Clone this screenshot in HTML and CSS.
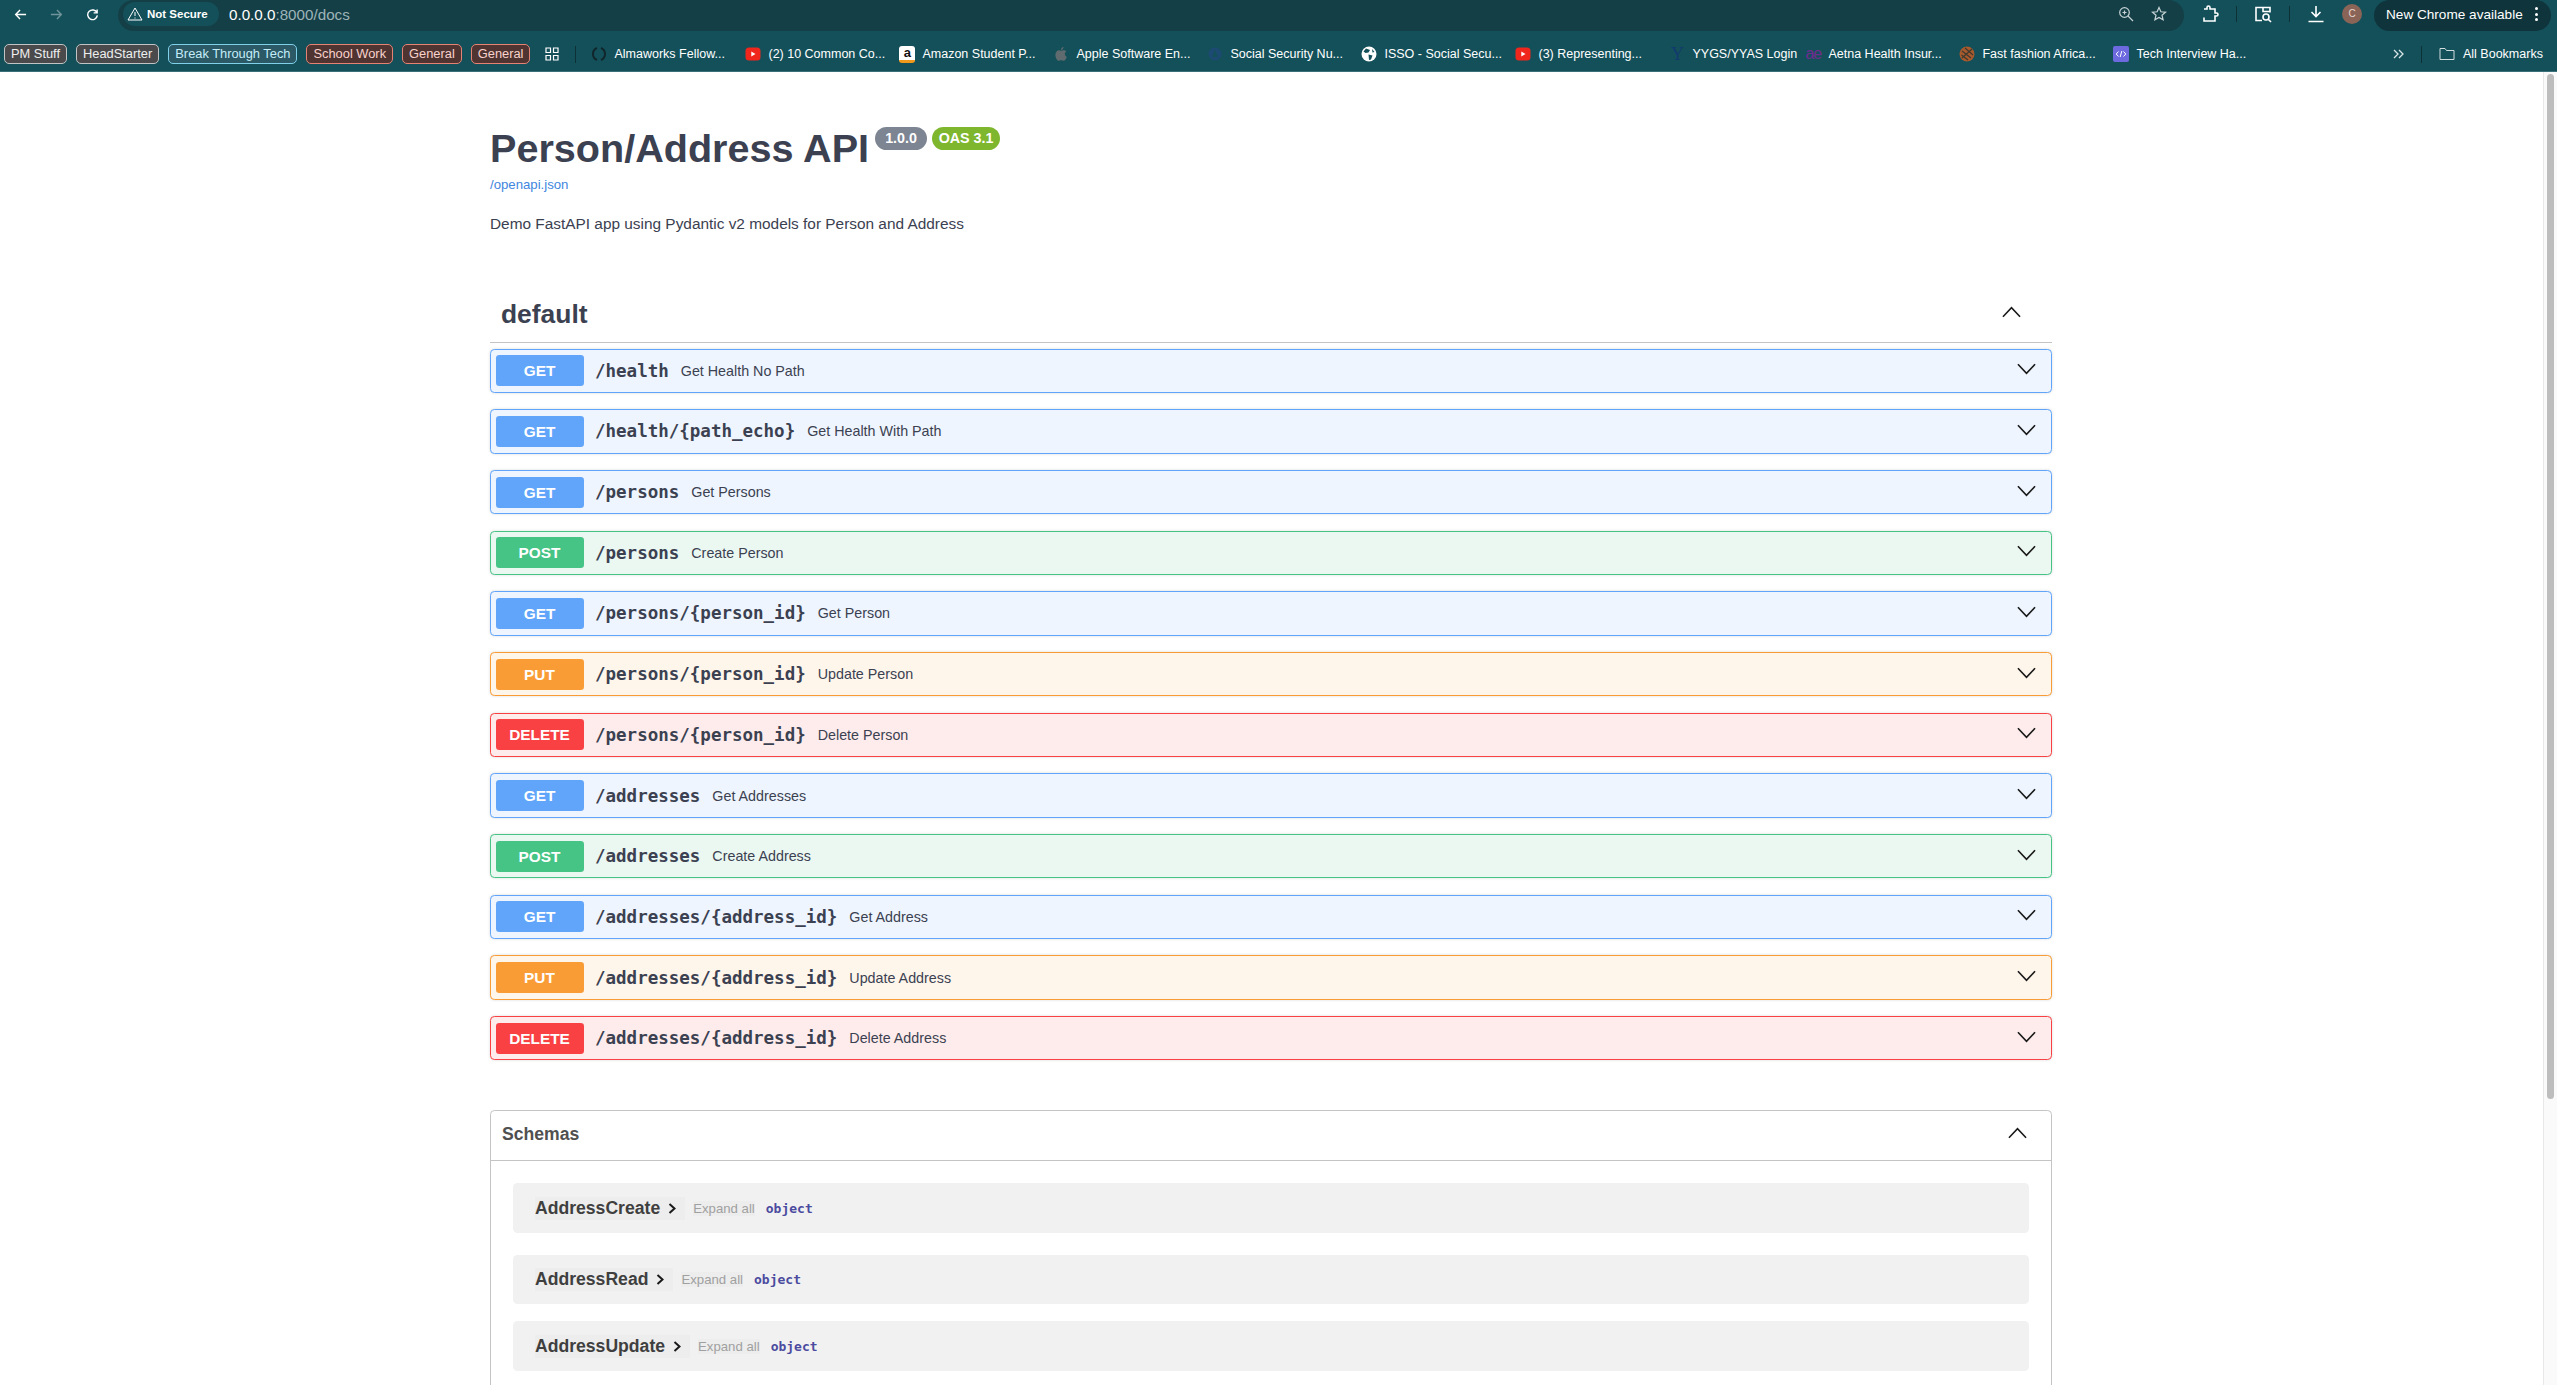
FILE: index.html
```html
<!DOCTYPE html>
<html lang="en">
<head>
    <meta charset="UTF-8">
    <title>Person/Address API - Swagger UI</title>
    <link rel="stylesheet" href="styles.css">
</head>
<body>
    <div class="window">
        <div class="toolbar">
            <div class="nav">
                <svg class="nav-icon" viewBox="0 0 14 14"><path d="M13 7H2M6.500 2.200 1.800 7l4.700 4.800" /></svg>
                <svg class="nav-icon dim" viewBox="0 0 14 14"><path d="M1 7h11M7.500 2.200 12.200 7l-4.700 4.800" /></svg>
                <svg class="nav-icon" viewBox="0 0 14 14"><path d="M11.800 5.200A5.200 5.200 0 1 0 12.200 8M12 1.500v3.800H8.200" /></svg>
            </div>
            <div class="omnibox">
                <div class="security">
                    <svg class="warn" viewBox="0 0 16 14"><path d="M8 1 15 13H1ZM8 5v4M8 10.500v1" /></svg>
                    <span>Not Secure</span>
                </div>
                <div class="url"><span class="host">0.0.0.0</span>:8000/docs</div>
                <svg class="omni-icon zoom-icon" viewBox="0 0 16 16"><circle cx="6.500" cy="6.500" r="4.800" /><path d="M10 10l5 5M4.500 6.500h4M6.500 4.500v4" /></svg>
                <svg class="omni-icon" viewBox="0 0 16 16"><path d="M8 1.500l1.900 4.300 4.600.4-3.500 3 1.100 4.600L8 11.400l-4.100 2.400L5 9.200l-3.500-3 4.600-.4Z" /></svg>
            </div>
            <div class="actions">
                <svg class="action-icon" viewBox="0 0 18 18"><path d="M3 4h3V2.500a1.500 1.500 0 0 1 3 0V4h5v4h1.500a1.500 1.500 0 0 1 0 3H14v5H3v-3.500" /></svg>
                <span class="sep"></span>
                <svg class="action-icon" viewBox="0 0 18 18"><path d="M8 15.500H2v-13h14v5M2 2.500h14v4H9v-4" /><circle cx="12" cy="12" r="3" /><path d="M14.200 14.200 17 17" /></svg>
                <span class="sep"></span>
                <svg class="action-icon" viewBox="0 0 18 18"><path d="M9 1v10M4.500 7 9 11.500 13.500 7M1.500 16.500h15" /></svg>
                <span class="avatar">C</span>
                <div class="update-pill">New Chrome available<span class="dots"><i></i><i></i><i></i></span></div>
            </div>
        </div>

        <div class="bookmarks">
            <div class="groups">
                <span class="group gray">PM Stuff</span>
                <span class="group gray">HeadStarter</span>
                <span class="group blue">Break Through Tech</span>
                <span class="group red">School Work</span>
                <span class="group red">General</span>
                <span class="group red">General</span>
            </div>
            <svg class="apps" viewBox="0 0 14 14"><path d="M1 1h4.500v4.500H1ZM8.500 1H13v4.500H8.500ZM1 8.500h4.500V13H1ZM8.500 8.500H13V13H8.500Z" /></svg>
            <span class="bar-sep"></span>
            <div class="bookmark">
                <svg class="favicon" viewBox="0 0 16 16"><path class="alma" d="M6 2a6.500 6.500 0 0 0 0 12M10 2a6.500 6.500 0 0 1 0 12" /></svg>
                <span>Almaworks Fellow...</span>
            </div>
            <div class="bookmark">
                <svg class="favicon" viewBox="0 0 16 16"><rect x="0.500" y="1.500" width="15" height="13" rx="3.500" fill="#f0261c" /><path d="M6.300 5.500 10.500 8l-4.200 2.500Z" fill="#fff" /></svg>
                <span>(2) 10 Common Co...</span>
            </div>
            <div class="bookmark">
                <span class="amazon">a</span>
                <span>Amazon Student P...</span>
            </div>
            <div class="bookmark">
                <svg class="favicon" viewBox="0 0 16 16"><path d="M10.500 1c.1 1.500-1 3-2.500 3 0-1.500 1-2.800 2.500-3ZM8 4.800c.8 0 1.500-.6 2.700-.6 1 0 2 .5 2.600 1.400-2.200 1.300-1.800 4.400.5 5.300-.6 1.500-1.800 3.900-3.200 3.900-.9 0-1.300-.6-2.500-.6s-1.700.6-2.500.6C4 14.800 2.400 11.400 2.400 9c0-2.900 1.900-4.700 3.600-4.700 1 0 1.500.5 2 .5Z" fill="#5f6b6e" /></svg>
                <span>Apple Software En...</span>
            </div>
            <div class="bookmark">
                <svg class="favicon" viewBox="0 0 16 16"><circle cx="8" cy="8" r="6.500" fill="#1c4a72" /><path d="M8 3.500 11 11H5Z" fill="#14505a" /></svg>
                <span>Social Security Nu...</span>
            </div>
            <div class="bookmark">
                <svg class="favicon" viewBox="0 0 16 16"><circle cx="8" cy="8" r="7.500" fill="#fff" /><path d="M5 2.500 9 4 7.500 6.500 4.500 7 2.500 5.500ZM7.500 8.500l4 1-1.500 4L8 14ZM11 3l2.500 3-2 .5Z" fill="#14505a" /></svg>
                <span>ISSO - Social Secu...</span>
            </div>
            <div class="bookmark">
                <svg class="favicon" viewBox="0 0 16 16"><rect x="0.500" y="1.500" width="15" height="13" rx="3.500" fill="#f0261c" /><path d="M6.300 5.500 10.500 8l-4.200 2.500Z" fill="#fff" /></svg>
                <span>(3) Representing...</span>
            </div>
            <div class="bookmark short">
                <span class="yale">Y</span>
                <span>YYGS/YYAS Login</span>
            </div>
            <div class="bookmark">
                <span class="aetna">ae</span>
                <span>Aetna Health Insur...</span>
            </div>
            <div class="bookmark">
                <svg class="favicon" viewBox="0 0 16 16"><circle cx="8" cy="8" r="7.500" fill="#a85a2c" /><path d="M3 5l9 7M2.500 9 9 14M6 2l8 7M3 12 13 3" stroke="#3d3a30" stroke-width="1.200" /></svg>
                <span>Fast fashion Africa...</span>
            </div>
            <div class="bookmark">
                <svg class="favicon" viewBox="0 0 16 16"><rect x="0" y="0" width="16" height="16" rx="2" fill="#6d6ae0" /><path d="M5.500 5.500 3.200 8l2.300 2.500M10.500 5.500 12.800 8l-2.300 2.500M8.800 5l-1.600 6" stroke="#fff" fill="none" /></svg>
                <span>Tech Interview Ha...</span>
            </div>
            <svg class="more" viewBox="0 0 11 10"><path d="M1 1l4 4-4 4M6 1l4 4-4 4" /></svg>
            <span class="bar-sep end"></span>
            <div class="all-bookmarks">
                <svg class="folder" viewBox="0 0 16 14"><path d="M1 12.500V1.500h5l1.500 2H15v9Z" /></svg>
                <span>All Bookmarks</span>
            </div>
        </div>

        <div class="viewport">
            <div class="page">
                <div class="info">
                    <div class="title-row">
                        <h1>Person/Address API</h1>
                        <span class="version">1.0.0</span>
                        <span class="oas">OAS 3.1</span>
                    </div>
                    <a class="spec-link" href="#">/openapi.json</a>
                    <p class="description">Demo FastAPI app using Pydantic v2 models for Person and Address</p>
                </div>

                <div class="tag-header">
                    <h2>default</h2>
                    <svg class="arrow" viewBox="0 0 20 12"><path d="M1 11 10 1.500 19 11" /></svg>
                </div>

                <div class="opblock get">
                    <span class="method">GET</span><span class="path">/health</span><span class="summary">Get Health No Path</span>
                    <svg class="arrow" viewBox="0 0 20 12"><path d="M1 1 10 10.500 19 1" /></svg>
                </div>
                <div class="opblock get">
                    <span class="method">GET</span><span class="path">/health/{path_echo}</span><span class="summary">Get Health With Path</span>
                    <svg class="arrow" viewBox="0 0 20 12"><path d="M1 1 10 10.500 19 1" /></svg>
                </div>
                <div class="opblock get">
                    <span class="method">GET</span><span class="path">/persons</span><span class="summary">Get Persons</span>
                    <svg class="arrow" viewBox="0 0 20 12"><path d="M1 1 10 10.500 19 1" /></svg>
                </div>
                <div class="opblock post">
                    <span class="method">POST</span><span class="path">/persons</span><span class="summary">Create Person</span>
                    <svg class="arrow" viewBox="0 0 20 12"><path d="M1 1 10 10.500 19 1" /></svg>
                </div>
                <div class="opblock get">
                    <span class="method">GET</span><span class="path">/persons/{person_id}</span><span class="summary">Get Person</span>
                    <svg class="arrow" viewBox="0 0 20 12"><path d="M1 1 10 10.500 19 1" /></svg>
                </div>
                <div class="opblock put">
                    <span class="method">PUT</span><span class="path">/persons/{person_id}</span><span class="summary">Update Person</span>
                    <svg class="arrow" viewBox="0 0 20 12"><path d="M1 1 10 10.500 19 1" /></svg>
                </div>
                <div class="opblock delete">
                    <span class="method">DELETE</span><span class="path">/persons/{person_id}</span><span class="summary">Delete Person</span>
                    <svg class="arrow" viewBox="0 0 20 12"><path d="M1 1 10 10.500 19 1" /></svg>
                </div>
                <div class="opblock get">
                    <span class="method">GET</span><span class="path">/addresses</span><span class="summary">Get Addresses</span>
                    <svg class="arrow" viewBox="0 0 20 12"><path d="M1 1 10 10.500 19 1" /></svg>
                </div>
                <div class="opblock post">
                    <span class="method">POST</span><span class="path">/addresses</span><span class="summary">Create Address</span>
                    <svg class="arrow" viewBox="0 0 20 12"><path d="M1 1 10 10.500 19 1" /></svg>
                </div>
                <div class="opblock get">
                    <span class="method">GET</span><span class="path">/addresses/{address_id}</span><span class="summary">Get Address</span>
                    <svg class="arrow" viewBox="0 0 20 12"><path d="M1 1 10 10.500 19 1" /></svg>
                </div>
                <div class="opblock put">
                    <span class="method">PUT</span><span class="path">/addresses/{address_id}</span><span class="summary">Update Address</span>
                    <svg class="arrow" viewBox="0 0 20 12"><path d="M1 1 10 10.500 19 1" /></svg>
                </div>
                <div class="opblock delete">
                    <span class="method">DELETE</span><span class="path">/addresses/{address_id}</span><span class="summary">Delete Address</span>
                    <svg class="arrow" viewBox="0 0 20 12"><path d="M1 1 10 10.500 19 1" /></svg>
                </div>

                <div class="schemas">
                    <div class="schemas-header">
                        <h4>Schemas</h4>
                        <svg class="arrow" viewBox="0 0 20 12"><path d="M1 11 10 1.500 19 11" /></svg>
                    </div>
                    <div class="schema-list">
                        <div class="model">
                            <span class="model-name">AddressCreate<svg class="model-arrow" viewBox="0 0 8 11"><path d="M1.500 1 6.500 5.500 1.500 10" /></svg></span>
                            <span class="expand">Expand all</span>
                            <span class="model-type">object</span>
                        </div>
                        <div class="model second">
                            <span class="model-name">AddressRead<svg class="model-arrow" viewBox="0 0 8 11"><path d="M1.500 1 6.500 5.500 1.500 10" /></svg></span>
                            <span class="expand">Expand all</span>
                            <span class="model-type">object</span>
                        </div>
                        <div class="model">
                            <span class="model-name">AddressUpdate<svg class="model-arrow" viewBox="0 0 8 11"><path d="M1.500 1 6.500 5.500 1.500 10" /></svg></span>
                            <span class="expand">Expand all</span>
                            <span class="model-type">object</span>
                        </div>
                    </div>
                </div>
            </div>
            <div class="scrollbar"><div class="thumb"></div></div>
        </div>
    </div>
</body>
</html>
```

FILE: styles.css
```css
* {
    box-sizing: border-box;
}
html, body {
    margin: 0;
    height: 100%;
    overflow: hidden;
}
body {
    background-color: white;
    color: #3b4151;
    font-family: "Liberation Sans", Arial, sans-serif;
}
svg {
    display: block;
    flex: none;
}
.window {
    display: flex;
    flex-direction: column;
    height: 100vh;
}

/* browser toolbar */
.toolbar {
    display: flex;
    align-items: center;
    flex: none;
    height: 31px;
    padding-left: 14px;
    background-color: #14505a;
    color: white;
}
.nav,
.security,
.url,
.omni-icon,
.action-icon,
.sep,
.avatar {
    margin-bottom: 3px;
}
.nav {
    display: flex;
    align-items: center;
    gap: 23px;
    width: 104px;
}
.nav-icon {
    width: 13px;
    height: 13px;
    fill: none;
    stroke: white;
    stroke-width: 1.5;
}
.nav-icon.dim {
    stroke: #6f959b;
}
.omnibox {
    display: flex;
    align-items: center;
    width: 2066px;
    height: 31px;
    padding-left: 5px;
    padding-right: 17px;
    background-color: #153f47;
    border-radius: 16px;
}
.security {
    display: flex;
    align-items: center;
    gap: 4px;
    width: 96px;
    height: 24px;
    padding-left: 4px;
    background-color: #14505a;
    border-radius: 12px;
    font-size: 11.500px;
    font-weight: bold;
}
.warn {
    width: 16px;
    height: 14px;
    fill: none;
    stroke: white;
    stroke-width: 1;
}
.url {
    margin-left: 10px;
    font-size: 15.200px;
    color: #9db4b8;
}
.host {
    color: white;
}
.omni-icon {
    width: 16px;
    height: 16px;
    fill: none;
    stroke: #c6d4d6;
    stroke-width: 1.2;
}
.zoom-icon {
    margin-left: auto;
    margin-right: 17px;
}
.actions {
    display: flex;
    align-items: center;
    flex: 1;
    padding-left: 17px;
}
.action-icon {
    width: 18px;
    height: 18px;
    fill: none;
    stroke: white;
    stroke-width: 1.6;
}
.sep {
    width: 1px;
    height: 16px;
    margin-left: 17px;
    margin-right: 17px;
    background-color: #0e3138;
}
.avatar {
    width: 20px;
    height: 20px;
    margin-left: 17px;
    border-radius: 50%;
    background-color: #8a6557;
    font-size: 10px;
    line-height: 20px;
    text-align: center;
    color: #e8d8d2;
}
.update-pill {
    display: flex;
    align-items: center;
    width: 177px;
    height: 31px;
    margin-left: 12px;
    padding-left: 12px;
    padding-bottom: 3px;
    background-color: #0f343c;
    border-radius: 16px;
    font-size: 13.600px;
    white-space: nowrap;
}
.dots {
    display: flex;
    flex-direction: column;
    gap: 2.500px;
    margin-left: 12px;
}
.dots i {
    width: 3px;
    height: 3px;
    border-radius: 50%;
    background-color: white;
}

/* bookmarks bar */
.bookmarks {
    display: flex;
    align-items: center;
    flex: none;
    height: 41px;
    padding-left: 4px;
    padding-top: 6px;
    background-color: #14505a;
    border-bottom: 1px solid #3c6f77;
    color: white;
    font-size: 12.500px;
    white-space: nowrap;
}
.groups {
    display: flex;
    gap: 9px;
}
.group {
    height: 20px;
    padding: 0 6px;
    border: 1px solid;
    border-radius: 5px;
    font-size: 12.850px;
    line-height: 18px;
}
.group.gray {
    border-color: #c0c4c4;
    background-color: #4a4a4c;
    color: #eeeeee;
}
.group.blue {
    border-color: #80d0ea;
    background-color: #2b5966;
    color: #c4ecf8;
}
.group.red {
    border-color: #e58274;
    background-color: #4f3432;
    color: #f9d2cb;
}
.apps {
    width: 14px;
    height: 14px;
    margin-left: 15px;
    fill: none;
    stroke: white;
    stroke-width: 1.2;
}
.bar-sep {
    width: 1px;
    height: 17px;
    margin-left: 16px;
    margin-right: 15px;
    background-color: #0e3138;
}
.bar-sep.end {
    margin-left: 17px;
    margin-right: 17px;
}
.bookmark {
    display: flex;
    align-items: center;
    gap: 7px;
    width: 154px;
}
.bookmark.short {
    width: 136px;
}
.favicon {
    width: 16px;
    height: 16px;
    fill: none;
}
.alma {
    stroke: #10262b;
    stroke-width: 2;
}
.amazon {
    width: 16px;
    height: 17px;
    background-color: white;
    border-radius: 3px;
    border-bottom: 3px solid #f0981c;
    font-size: 13px;
    font-weight: bold;
    line-height: 13px;
    text-align: center;
    color: #111111;
}
.yale {
    width: 16px;
    font-family: "Liberation Serif", serif;
    font-size: 18px;
    text-align: center;
    color: #123a6e;
}
.aetna {
    width: 16px;
    font-size: 16px;
    line-height: 16px;
    letter-spacing: -1px;
    color: #6f2c8f;
}
.more {
    width: 11px;
    height: 10px;
    margin-left: auto;
    fill: none;
    stroke: #d8e4e6;
    stroke-width: 1.3;
}
.all-bookmarks {
    display: flex;
    align-items: center;
    gap: 8px;
    width: 118px;
}
.folder {
    width: 16px;
    height: 14px;
    fill: none;
    stroke: #d0dcde;
    stroke-width: 1;
}

/* swagger page */
.viewport {
    display: flex;
    flex: 1;
    min-height: 0;
    overflow: hidden;
}
.page {
    flex: 1;
    padding: 0 491px 0 490px;
}
.scrollbar {
    flex: none;
    width: 14px;
    padding: 2px 3px 0 3px;
    background-color: #fafafa;
    border-left: 1px solid #e8e8e8;
}
.thumb {
    height: 1025px;
    background-color: #bdbdbd;
    border-radius: 4px;
}
.info {
    padding-top: 53px;
}
.title-row {
    display: flex;
    align-items: flex-start;
}
h1 {
    margin: 0;
    font-size: 39.600px;
    line-height: 46px;
    font-weight: bold;
}
.version,
.oas {
    height: 23px;
    margin-top: 2px;
    border-radius: 12px;
    font-size: 14.300px;
    font-weight: bold;
    line-height: 23px;
    text-align: center;
    color: white;
}
.version {
    width: 52px;
    margin-left: 6px;
    background-color: #7d8492;
}
.oas {
    width: 68px;
    margin-left: 5px;
    background-color: #7eb62e;
}
.spec-link {
    display: block;
    margin-top: 6px;
    font-size: 13.200px;
    line-height: 16px;
    color: #4186e0;
    text-decoration: none;
}
.description {
    margin: 22px 0 0 0;
    font-size: 15.400px;
    line-height: 18px;
}
.tag-header {
    display: flex;
    align-items: center;
    justify-content: space-between;
    height: 65px;
    margin-top: 45px;
    padding: 8px 31px 0 11px;
    border-bottom: 1px solid #c4c4c4;
}
h2 {
    margin: 0;
    font-size: 26.400px;
    font-weight: bold;
}
.tag-header .arrow {
    margin-top: -4px;
}
.arrow {
    width: 19px;
    height: 12px;
    fill: none;
    stroke: #1a1a1a;
    stroke-width: 1.7;
}
.opblock {
    display: flex;
    align-items: center;
    height: 44.600px;
    margin-bottom: 16.080px;
    padding: 0 15px 0 4.500px;
    border: 1.100px solid;
    border-radius: 4.400px;
    box-shadow: 0 0 3px rgba(0,0,0,0.15);
}
.tag-header + .opblock {
    margin-top: 5.500px;
}
.opblock .arrow {
    margin-left: auto;
    margin-bottom: 3px;
}
.opblock.get {
    background-color: #eef5fe;
    border-color: #60a5fa;
}
.opblock.post {
    background-color: #ebf7f1;
    border-color: #46c486;
}
.opblock.put {
    background-color: #fef5eb;
    border-color: #f99c35;
}
.opblock.delete {
    background-color: #feecec;
    border-color: #f94144;
}
.method {
    width: 88px;
    height: 31px;
    border-radius: 3.300px;
    font-size: 15.400px;
    font-weight: bold;
    line-height: 31px;
    text-align: center;
    color: white;
}
.get .method {
    background-color: #60a5fa;
}
.post .method {
    background-color: #46c486;
}
.put .method {
    background-color: #f99c35;
}
.delete .method {
    background-color: #f94144;
}
.path {
    margin-left: 11.500px;
    font-family: "DejaVu Sans Mono", monospace;
    font-size: 17.500px;
    font-weight: bold;
}
.summary {
    margin-left: 12px;
    font-size: 14.300px;
}

.schemas {
    margin-top: 49.500px;
    border: 1.100px solid #c4c4c4;
    border-radius: 4.400px;
    padding-bottom: 40px;
}
.schemas-header {
    display: flex;
    align-items: center;
    justify-content: space-between;
    height: 50px;
    padding: 0 24px 2px 11px;
    border-bottom: 1.100px solid #c4c4c4;
}
.schemas-header .arrow {
    margin-bottom: 3px;
}
h4 {
    margin: 0;
    font-size: 17.600px;
    font-weight: bold;
    color: #505050;
}
.schema-list {
    padding: 22.500px 22px 0 22px;
}
.model {
    display: flex;
    align-items: center;
    height: 50px;
    margin-bottom: 22px;
    padding-left: 22px;
    background-color: #f1f1f1;
    border-radius: 4.400px;
}
.model.second {
    height: 49px;
    margin-bottom: 17px;
}
.model-name {
    display: flex;
    align-items: center;
    height: 23px;
    padding-right: 9px;
    background-color: #ededed;
    font-size: 17.600px;
    font-weight: bold;
    color: #3f3f3f;
}
.model-arrow {
    width: 8px;
    height: 11px;
    margin-left: 8px;
    fill: none;
    stroke: #1a1a1a;
    stroke-width: 2;
}
.expand {
    margin-left: 8px;
    padding: 0;
    background-color: #ededed;
    font-size: 13.200px;
    color: #a0a0a0;
}
.model-type {
    margin-left: 11px;
    font-family: "DejaVu Sans Mono", monospace;
    font-size: 13px;
    font-weight: bold;
    color: #4b4b9f;
}
```
